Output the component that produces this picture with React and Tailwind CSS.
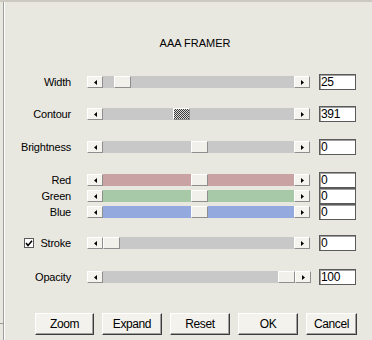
import React from "react";

const ArrowBtn = ({ dir }) => (
  <div className="w-[16px] h-[12px] shrink-0 bg-[#f4f3ee] border-t border-l border-t-white border-l-white border-b border-r border-b-[#8e8e8e] border-r-[#8e8e8e] flex items-center justify-center">
    <svg width="3" height="5" viewBox="0 0 3 5">
      {dir === "left" ? (
        <polygon points="3,0 0,2.5 3,5" fill="#000" />
      ) : (
        <polygon points="0,0 3,2.5 0,5" fill="#000" />
      )}
    </svg>
  </div>
);

const Thumb = ({ hatched }) => (
  <div
    className={
      "w-[17px] h-[12px] shrink-0 border-t border-l border-t-white border-l-white border-b border-r border-b-[#8e8e8e] border-r-[#8e8e8e] " +
      (hatched
        ? "bg-[repeating-conic-gradient(#3a3a3a_0_25%,#d8d8d8_0_50%)] bg-[length:2px_2px]"
        : "bg-[#f1f0eb]")
    }
  />
);

const Slider = ({ offset, track, hatched }) => (
  <div className="flex w-[223px] h-[12px] ml-[16px]">
    <ArrowBtn dir="left" />
    <div className={"flex-1 flex h-[12px] " + track}>
      <div className="shrink-0" style={{ width: offset }} />
      <Thumb hatched={hatched} />
    </div>
    <ArrowBtn dir="right" />
  </div>
);

const Input = ({ value }) => (
  <div className="ml-[9px] w-[37px] h-[16px] bg-white border border-[#5a5a5a] shadow-[inset_1px_1px_0_#a0a0a0] text-[12px] leading-[14px] pl-[1px] text-black tracking-[-0.3px]">
    {value}
  </div>
);

const Row = ({ label, offset, value, track = "bg-[#c8c8c8]", hatched, mt, check }) => (
  <div className={"flex items-center h-[16px] " + mt}>
    <div className="w-[71px] flex items-center justify-end text-[11px] text-black tracking-[-0.2px] whitespace-nowrap">
      {check && (
        <div className="w-[10px] h-[10px] bg-white border border-[#5a5a5a] mr-auto ml-[24px] flex items-center justify-center">
          <svg width="8" height="7" viewBox="0 0 8 7">
            <polyline points="1,3 3,5.5 7,0.8" fill="none" stroke="#000" strokeWidth="1.6" />
          </svg>
        </div>
      )}
      {label}
    </div>
    <Slider offset={offset} track={track} hatched={hatched} />
    <Input value={value} />
  </div>
);

const Btn = ({ w, children }) => (
  <div
    className={
      "h-[22px] bg-[#f3f2ed] border-t border-l border-t-white border-l-white border-b border-r border-b-[#3c3c3c] border-r-[#3c3c3c] shadow-[inset_-1px_-1px_0_#a0a0a0] flex items-center justify-center text-[12px] text-black tracking-[-0.4px] " +
      w
    }
  >
    {children}
  </div>
);

export default function App() {
  return (
    <div
      className="w-[372px] h-[340px] bg-[#e9e8e0] overflow-hidden flex flex-col"
      style={{ fontFamily: '"Liberation Sans", Arial, sans-serif' }}
    >
      <div className="h-[2px] bg-[#cbc9c0] shrink-0" />
      <div className="flex flex-1">
        <div className="w-[3px] shrink-0 flex flex-col justify-end">
          <div className="h-[17px] border-t border-[#9a9a9a]" />
        </div>
        <div className="flex-1 flex flex-col border-l border-[#9d9d9d] shadow-[inset_1px_0_0_#ffffff] pl-[0px]">
          <div className="ml-[-4px] mt-[35px] h-[13px] text-center text-[11px] leading-[13px] text-black pl-[18px]">
            AAA FRAMER
          </div>
          <div className="ml-[-4px] flex flex-col">
            <Row label="Width" offset={11} value="25" mt="mt-[24px]" />
            <Row label="Contour" offset={70} value="391" hatched mt="mt-[16px]" />
            <Row label="Brightness" offset={88} value="0" mt="mt-[17px]" />
            <Row label="Red" offset={88} value="0" track="bg-[#c9a3a3]" mt="mt-[17px]" />
            <Row label="Green" offset={88} value="0" track="bg-[#a8c9a8]" mt="mt-0" />
            <Row label="Blue" offset={88} value="0" track="bg-[#94aadf]" mt="mt-0" />
            <Row label="Stroke" offset={0} value="0" check mt="mt-[15px]" />
            <Row label="Opacity" offset={175} value="100" mt="mt-[18px]" />
            <div className="flex gap-[8px] pl-[35px] mt-[28px]">
              <Btn w="w-[59px]">Zoom</Btn>
              <Btn w="w-[60px]">Expand</Btn>
              <Btn w="w-[60px]">Reset</Btn>
              <Btn w="w-[60px]">OK</Btn>
              <Btn w="w-[51px]">Cancel</Btn>
            </div>
          </div>
        </div>
      </div>
    </div>
  );
}
